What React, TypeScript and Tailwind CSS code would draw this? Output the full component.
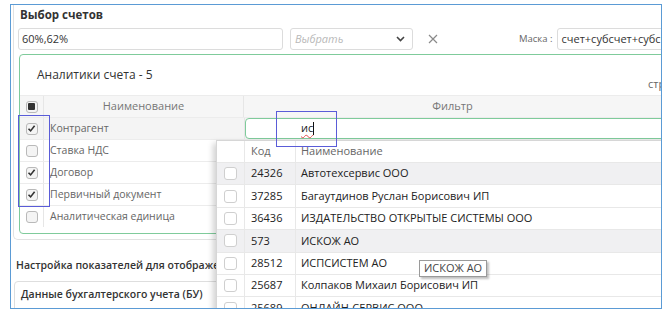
import React from "react";

const font = { fontFamily: '"Open Sans", "Noto Sans", sans-serif' };

function Check({ checked, header }: { checked?: boolean; header?: boolean }) {
  return (
    <div className="w-[12px] h-[12px] rounded-[3px] border border-[#b9b9b9] bg-[#f4f4f4] flex items-center justify-center">
      {header ? <div className="w-[7px] h-[7px] bg-[#333] rounded-[1px]" /> : null}
      {checked ? (
        <svg width="9" height="9" viewBox="0 0 9 9">
          <path d="M1.5 4.8 L3.6 6.9 L7.6 1.8" fill="none" stroke="#333" strokeWidth="1.6" />
        </svg>
      ) : null}
    </div>
  );
}

const leftRows = [
  { name: "Контрагент", checked: true, active: true },
  { name: "Ставка НДС", checked: false },
  { name: "Договор", checked: true },
  { name: "Первичный документ", checked: true },
  { name: "Аналитическая единица", checked: false },
];

const popRows = [
  { code: "24326", name: "Автотехсервис ООО", gray: true },
  { code: "37285", name: "Багаутдинов Руслан Борисович ИП" },
  { code: "36436", name: "ИЗДАТЕЛЬСТВО ОТКРЫТЫЕ СИСТЕМЫ ООО" },
  { code: "573", name: "ИСКОЖ АО", gray: true },
  { code: "28512", name: "ИСПСИСТЕМ АО" },
  { code: "25687", name: "Колпаков Михаил Борисович ИП" },
  { code: "25689", name: "ОНЛАЙН-СЕРВИС ООО" },
];

export default function App() {
  return (
    <div className="relative w-[672px] h-[312px] bg-white overflow-hidden text-[#333]" style={font}>
      <div className="relative ml-[10px] mt-[4px] w-[652px] h-[305px] border border-[#5b9bd5] overflow-hidden bg-white">
        {/* top gray panel */}
        <div className="ml-[2px] w-[720px] border-l border-b border-[#e2e2e2] rounded-bl-[5px] pl-[4px] pb-[5px]">
          <div className="pt-[2px] pl-[2px] text-[11.5px] leading-[15px] font-bold text-[#333]">Выбор счетов</div>
          <div className="mt-[6px] flex items-center h-[22px]">
            <div className="shrink-0 w-[265px] h-[22px] border border-[#dcdcdc] rounded-[3px] flex items-center pl-[3px] text-[11px] text-[#333]">
              60%,62%
            </div>
            <div className="shrink-0 ml-[7px] w-[123px] h-[22px] border border-[#dcdcdc] rounded-[3px] flex items-center justify-between pl-[4px] pr-[7px]">
              <span className="text-[11px] italic text-[#b8b8b8]">Выбрать</span>
              <svg width="9" height="6" viewBox="0 0 9 6">
                <path d="M1 1 L4.5 4.5 L8 1" fill="none" stroke="#444" strokeWidth="1.6" />
              </svg>
            </div>
            <svg className="shrink-0 ml-[15px]" width="10" height="10" viewBox="0 0 10 10">
              <path d="M1 1 L9 9 M9 1 L1 9" stroke="#8a8a8a" strokeWidth="1.2" />
            </svg>
            <span className="shrink-0 ml-[81px] text-[9.5px] text-[#666]">Маска :</span>
            <div className="shrink-0 ml-[4px] w-[160px] h-[22px] border border-[#dcdcdc] rounded-[3px] flex items-center pl-[4px] text-[11px] text-[#333] whitespace-nowrap">
              счет+субсчет+субсчет
            </div>
          </div>
          {/* green panel */}
          <div className="mt-[4px] ml-[1px] w-[700px] h-[180px] border border-[#7fcb9b] rounded-[4px]">
            <div className="h-[40px] flex">
              <div className="shrink-0 w-[628px] pl-[17px] flex items-center text-[12px] text-[#333]">Аналитики счета - 5</div>
              <div className="shrink-0 pt-[21px] text-[11px] text-[#666] whitespace-nowrap">строк на странице</div>
            </div>
            <div className="flex h-[22px] bg-[#f6f6f6] border-t border-[#ececec] text-[11px] text-[#777]">
              <div className="shrink-0 w-[24px] border-r border-[#e6e6e6] flex items-center justify-center">
                <Check header />
              </div>
              <div className="shrink-0 w-[200px] border-r border-[#e6e6e6] flex items-center justify-center">Наименование</div>
              <div className="shrink-0 w-[417px] flex items-center justify-center">Фильтр</div>
            </div>
            {leftRows.map((r) => (
              <div
                key={r.name}
                className={`flex h-[22px] border-t border-[#ececec] text-[10.5px] text-[#666] ${r.active ? "bg-[#f4f4f4]" : "bg-white"}`}
              >
                <div className="shrink-0 w-[24px] border-r border-[#e6e6e6] flex items-center justify-center">
                  <Check checked={r.checked} />
                </div>
                <div className="shrink-0 w-[200px] flex items-center pl-[6px]">{r.name}</div>
                <div className="flex-1 border-l border-[#e6e6e6]">
                  {r.active ? (
                    <div className="h-[21px] bg-white border border-[#7fcb9b] rounded-l-[4px] flex items-center pl-[55px] text-[11px] text-[#222]">
                      <span className="underline decoration-wavy decoration-[#e05050] decoration-[1px] underline-offset-[2px]">ис</span>
                      <span className="w-[1px] h-[13px] bg-[#111]" />
                    </div>
                  ) : null}
                </div>
              </div>
            ))}
          </div>
        </div>
        <div className="mt-[18px] ml-[5px] text-[10.5px] leading-[15px] font-semibold text-[#333] whitespace-nowrap">
          Настройка показателей для отображения
        </div>
        <div className="mt-[8px] ml-[3px] w-[400px] h-[40px] border border-[#dedede] rounded-[4px] pt-[5px] pl-[6px] text-[10.5px] leading-[15px] font-semibold text-[#333]">
          Данные бухгалтерского учета (БУ)
        </div>

        {/* dropdown popup */}
        <div className="absolute left-[205px] top-[135px] w-[470px] h-[200px] bg-white border-l border-t border-[#d6d6d6] shadow-[-3px_3px_6px_rgba(0,0,0,0.18)]">
          <div className="flex h-[21px] text-[11px] text-[#666]">
            <div className="w-[28px] border-r border-[#e8e8e8]" />
            <div className="w-[51px] border-r border-[#e8e8e8] flex items-center pl-[6px]">Код</div>
            <div className="flex-1 flex items-center pl-[5px]">Наименование</div>
          </div>
          {popRows.map((p) => (
            <div
              key={p.code}
              className={`flex h-[22.4px] border-t border-[#e8e8e8] text-[11px] text-[#222] ${p.gray ? "bg-[#f0f0f2]" : "bg-white"}`}
            >
              <div className="w-[28px] border-r border-[#e8e8e8] flex items-center justify-center">
                <div className="w-[13px] h-[13px] rounded-[3px] border border-[#cfcfcf] bg-white" />
              </div>
              <div className="w-[51px] border-r border-[#e8e8e8] flex items-center pl-[6px]">{p.code}</div>
              <div className="flex-1 flex items-center pl-[5px] whitespace-nowrap">{p.name}</div>
            </div>
          ))}
        </div>
      </div>

      {/* annotation rectangles */}
      <div className="absolute left-[18px] top-[115px] w-[32px] h-[92px] border-[1.5px] border-[#5a5cd8]" />
      <div className="absolute left-[276px] top-[111px] w-[61px] h-[36px] border-[1.5px] border-[#5a5cd8]" />

      {/* tooltip */}
      <div className="absolute left-[419px] top-[260px] h-[17px] px-[4px] bg-white border border-[#9a9a9a] shadow-[2px_2px_2px_rgba(0,0,0,0.25)] flex items-center text-[11px] text-[#444] whitespace-nowrap">
        ИСКОЖ АО
      </div>
    </div>
  );
}
